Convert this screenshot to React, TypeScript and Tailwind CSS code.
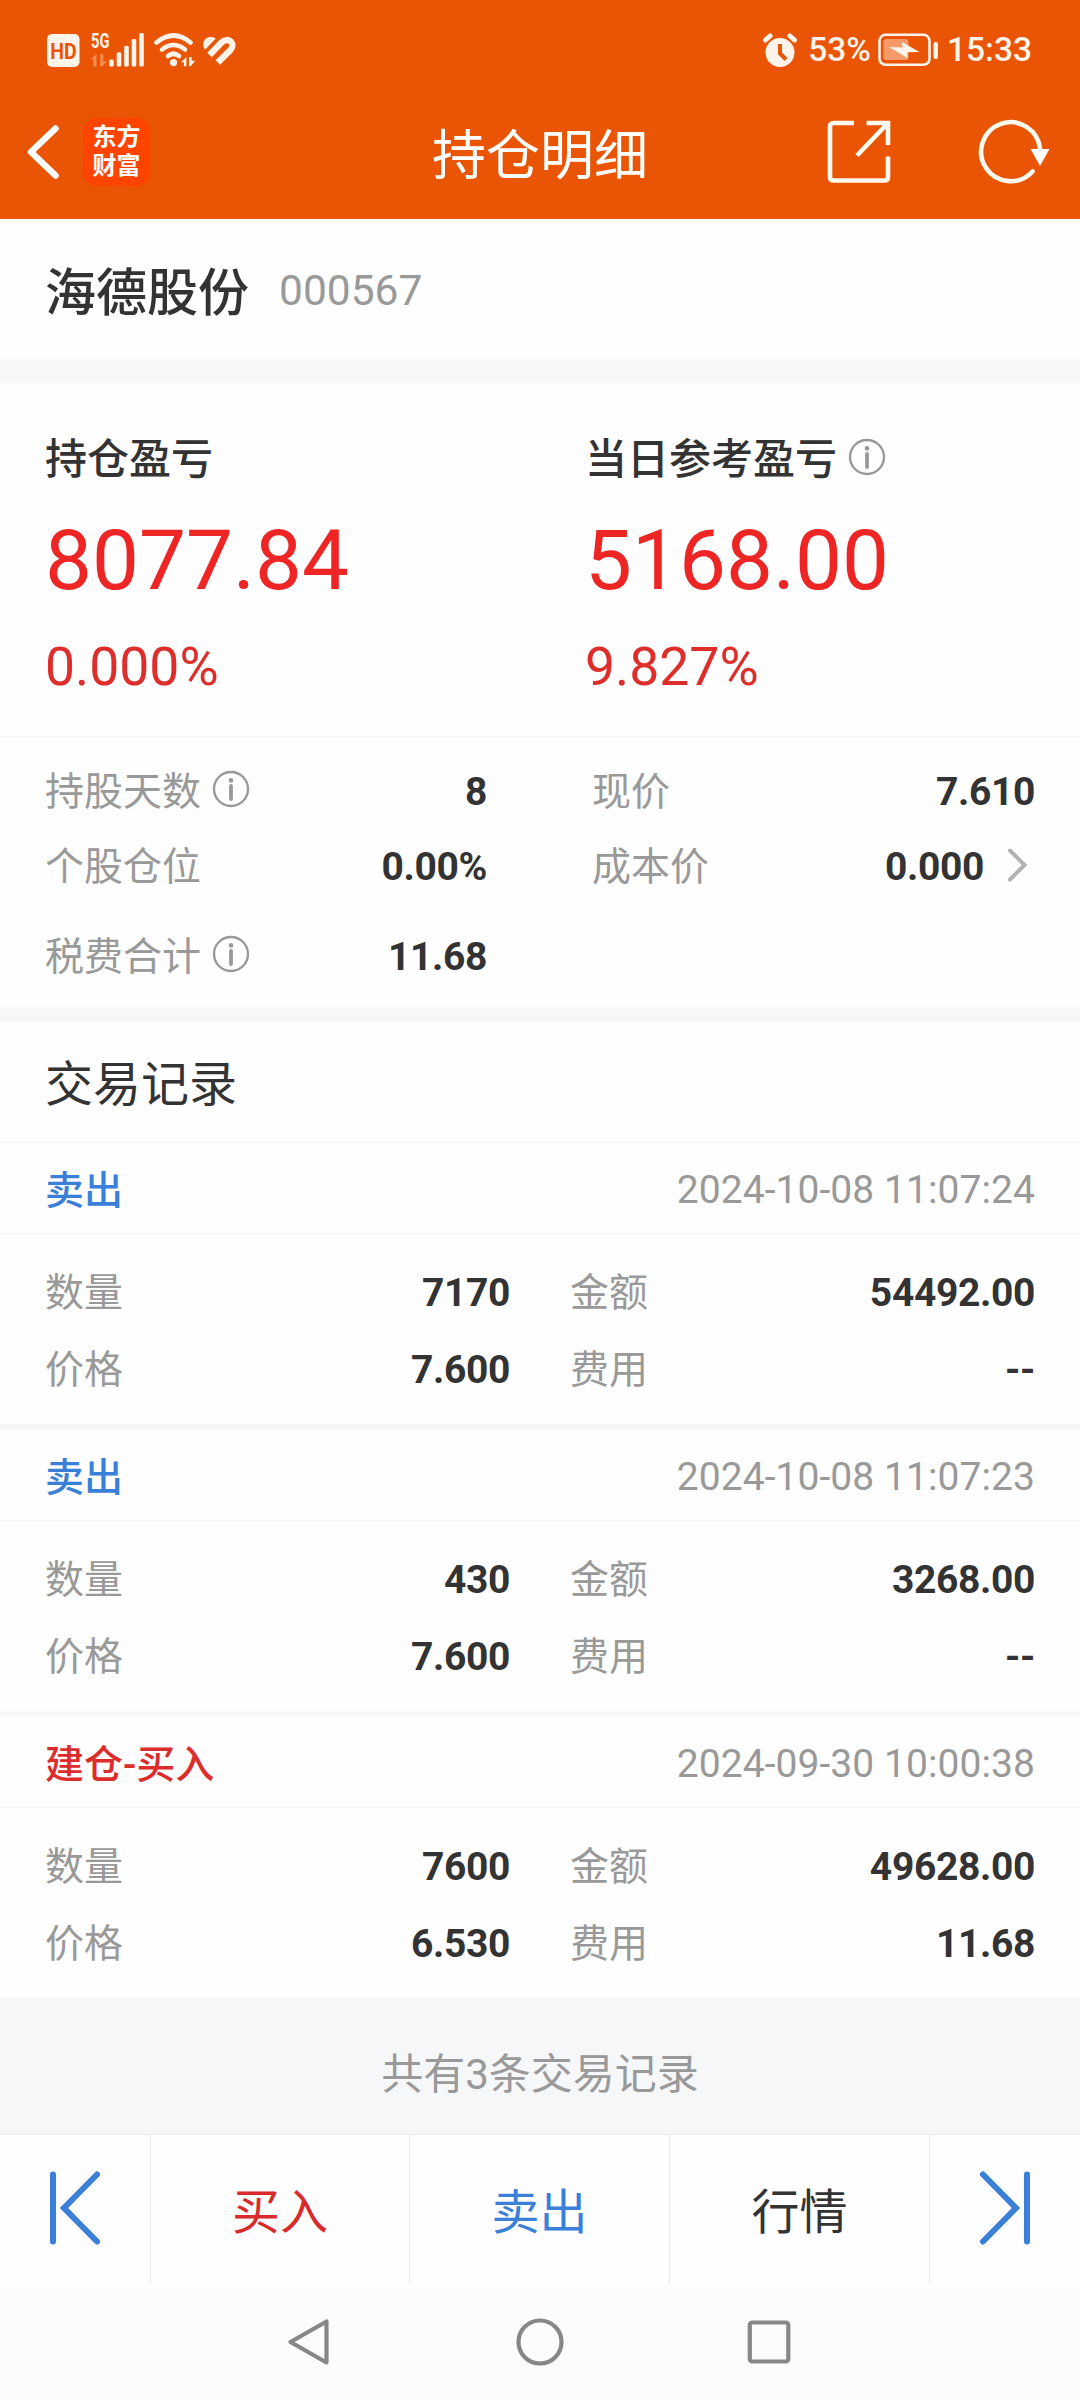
import type { ReactNode } from "react";

type TradeRecord = {
  type: string;
  color: string;
  time: string;
  count: string;
  amount: string;
  price: string;
  fee: string;
};

const records: TradeRecord[] = [
  { type: "卖出", color: "text-[#3a7fd8]", time: "2024-10-08 11:07:24", count: "7170", amount: "54492.00", price: "7.600", fee: "--" },
  { type: "卖出", color: "text-[#3a7fd8]", time: "2024-10-08 11:07:23", count: "430", amount: "3268.00", price: "7.600", fee: "--" },
  { type: "建仓-买入", color: "text-[#dd2c2c]", time: "2024-09-30 10:00:38", count: "7600", amount: "49628.00", price: "6.530", fee: "11.68" },
];

function InfoIcon() {
  return (
    <svg width="38" height="38" viewBox="0 0 38 38" fill="none" className="mb-[6px] ml-[11px] shrink-0">
      <circle cx="19" cy="19" r="17" stroke="#999" strokeWidth="2.4" />
      <circle cx="19" cy="10.4" r="2.3" fill="#999" />
      <path d="M19 16v13" stroke="#999" strokeWidth="3.8" strokeLinecap="round" />
    </svg>
  );
}

function StatusBar() {
  return (
    <div className="flex h-[84px] items-start justify-between pl-[46px] pr-[48px] pt-[30px]">
      <svg width="192" height="40" viewBox="46 30 192 40" fill="#fff3ea">
        <rect x="47" y="34" width="32.5" height="33" rx="5" />
        <text x="50.3" y="58.5" textLength="26.5" lengthAdjust="spacingAndGlyphs" fontSize="22" fontWeight="700" fill="#e95504">HD</text>
        <text x="91" y="48" textLength="18.5" lengthAdjust="spacingAndGlyphs" fontSize="21" fontWeight="700">5G</text>
        {/* モバイル通信の矢印 */}
        <path d="M96.5 54v12.3h-3.2v-7h-2.6zM100.3 54h3v7.4h3.7l-5 4.9h-1.7z" fill="#f78d52" />
        <rect x="109.2" y="59.5" width="4.6" height="7" rx="1.6" />
        <rect x="116.7" y="52.3" width="4.6" height="14.2" rx="1.6" />
        <rect x="124.2" y="45.7" width="4.6" height="20.8" rx="1.6" />
        <rect x="131.7" y="39" width="4.6" height="27.5" rx="1.6" />
        <rect x="139.2" y="33" width="4.6" height="33.5" rx="1.6" />
        <g fill="none" stroke="#fff3ea" strokeWidth="4.6" strokeLinecap="round">
          <path d="M156.5 42.5Q173.5 28.5 190.5 42.5" />
          <path d="M162 49.5Q173.5 40.5 185 49.5" />
          <path d="M168 56Q173.5 51.5 179 56" />
        </g>
        <circle cx="173.5" cy="62.6" r="3.6" />
        <path d="M186.4 57v9.3h-2.5v-4h-2.9zM189 57h2.6v3.7h3.6l-4.5 5.6H189z" />
        {/* ハート */}
        <path d="M205 49.8c-4-6-1-12.8 5.800-12.8 2 0 3.700.6 5 1.600z" />
        <path d="M209.500 55L221.500 42.500c3-3 7.300-3.200 9.500-.8s1.600 6-.8 8.600L217.800 62.500" fill="none" stroke="#fff3ea" strokeWidth="6.400" />
      </svg>
      <div className="flex items-center text-[33.5px] font-medium leading-[40px] text-[#fff3ea]">
        <svg width="36" height="36" viewBox="0 0 36 36" fill="none" className="mr-[10px]">
          <circle cx="18" cy="20.5" r="14.5" fill="#fff3ea" />
          <path d="M3.5 8l4.5-4M32.5 8l-4.5-4" stroke="#fff3ea" strokeWidth="5" strokeLinecap="round" />
          <path d="M18 12v9.5l6 6" stroke="#e95504" strokeWidth="4" />
        </svg>
        <span>53%</span>
        <svg width="61" height="34" viewBox="0 0 61 34" fill="none" className="ml-[7px] mr-[8px]">
          <rect x="1.5" y="1.8" width="50" height="30" rx="6" stroke="#fff3ea" strokeWidth="2.6" />
          <rect x="5.5" y="6" width="25" height="21" rx="3" fill="#f59a68" />
          <path d="M11 14l13.500 .5-.5-5.500 17.500 10-12.500.3 .8 6z" fill="#fff3ea" />
          <rect x="55.5" y="9" width="4.500" height="17" rx="2" fill="#fff3ea" />
        </svg>
        <span>15:33</span>
      </div>
    </div>
  );
}

function TitleBar() {
  return (
    <div className="grid h-[135px] grid-cols-[1fr_auto_1fr] items-center text-white">
      <div className="flex items-center pl-[26px]">
        <svg width="34" height="58" viewBox="0 0 34 58" fill="none">
          <path d="M29.5 5.5L5 29l24.5 23.5" stroke="#fff" strokeWidth="6.5" strokeLinecap="round" strokeLinejoin="round" />
        </svg>
        <div className="ml-[23px] flex h-[68px] w-[67px] flex-col items-center justify-center rounded-[14px] bg-[#ff4400] text-[24px] font-bold leading-[29px]">
          <span>东方</span>
          <span>财富</span>
        </div>
      </div>
      <h1 className="pt-[10px] text-[54px] leading-[60px]">持仓明细</h1>
      <div className="flex items-center justify-end pr-[30px]">
        <svg width="66" height="66" viewBox="0 0 66 66" fill="none" stroke="#fffaf0" strokeWidth="4.6">
          <path d="M28 4H7.5Q4 4 4 7.5v50.5q0 3.5 3.5 3.5h51q3.5 0 3.5-3.5V37.5" />
          <path d="M40.5 4H62v22M61.5 4.500L31 36.500" />
        </svg>
        <svg width="74" height="68" viewBox="0 0 74 68" fill="none" className="ml-[84px]">
          <path d="M56.5 53.5A29.5 29.5 0 1 1 64 31" stroke="#fffaf0" strokeWidth="4.6" strokeLinecap="round" />
          <path d="M54.5 31h19l-9.500 17z" fill="#fff" />
        </svg>
      </div>
    </div>
  );
}

function ProfitCard({ title, value, percent, info }: { title: string; value: string; percent: string; info?: boolean }) {
  return (
    <div className="w-[540px] pl-[45px] pt-[52px]">
      <div className="flex h-[50px] items-center text-[42px] font-medium leading-[50px] text-[#333]">
        {title}
        {info && <InfoIcon />}
      </div>
      <div className="mt-[25px] text-[83.6px] leading-[100px] text-[#ed2524]">{value}</div>
      <div className="mt-[27px] text-[53.5px] leading-[60px] text-[#de2e2c]">{percent}</div>
    </div>
  );
}

function Row({ label, value, info, children }: { label: string; value: string; info?: boolean; children?: ReactNode }) {
  return (
    <div className="flex h-[50px] items-center text-[39px] leading-[50px]">
      <span className="text-[#999]">{label}</span>
      {info && <InfoIcon />}
      <span className="ml-auto font-bold tracking-[-0.35px] text-[#333]">{value}</span>
      {children}
    </div>
  );
}

function RecordItem({ record }: { record: TradeRecord }) {
  return (
    <li>
      <div className="flex h-[91px] items-center justify-between border-b border-[#f4f5f6] px-[45px] pt-[4px] text-[39px]">
        <span className={`pt-[2px] font-medium ${record.color}`}>{record.type}</span>
        <span className="tracking-[0.07px] text-[#999]">{record.time}</span>
      </div>
      <div className="flex h-[190px] justify-between px-[45px] pt-[34px]">
        <div className="flex w-[465px] flex-col gap-[27px]">
          <Row label="数量" value={record.count} />
          <Row label="价格" value={record.price} />
        </div>
        <div className="flex w-[465px] flex-col gap-[27px]">
          <Row label="金额" value={record.amount} />
          <Row label="费用" value={record.fee} />
        </div>
      </div>
    </li>
  );
}

export default function App() {
  return (
    <div className="flex h-[2400px] w-[1080px] flex-col bg-[#fefefe] font-[Roboto,'Noto_Sans_CJK_SC',sans-serif]">
      <header className="h-[219px] bg-[#e95504]">
        <StatusBar />
        <TitleBar />
      </header>

      <div className="flex h-[140px] items-center pl-[45px]">
        <span className="pt-[10px] text-[51px] font-medium text-[#333]">海德股份</span>
        <span className="ml-[30px] pt-[4px] text-[42.5px] text-[#999]">000567</span>
      </div>
      <div className="h-[24px] bg-[#f6f7f9]" />

      <section className="flex h-[354px] border-b border-[#f4f5f6]">
        <ProfitCard title="持仓盈亏" value="8077.84" percent="0.000%" />
        <ProfitCard title="当日参考盈亏" value="5168.00" percent="9.827%" info />
      </section>

      <section className="flex h-[270px] justify-between px-[45px] pt-[30px]">
        <div className="w-[442px]">
          <Row label="持股天数" value="8" info />
          <div className="h-[25px]" />
          <Row label="个股仓位" value="0.00%" />
          <div className="h-[40px]" />
          <Row label="税费合计" value="11.68" info />
        </div>
        <div className="w-[443px]">
          <Row label="现价" value="7.610" />
          <div className="h-[25px]" />
          <Row label="成本价" value="0.000">
            <svg width="22" height="36" viewBox="0 0 22 36" fill="none" className="mb-[5px] ml-[23px] mr-[6px]">
              <path d="M3 3.5l14.5 14.5L3 32.5" stroke="#b2b2b2" strokeWidth="4" strokeLinecap="round" />
            </svg>
          </Row>
        </div>
      </section>
      <div className="h-[15px] bg-[#f6f7f9]" />

      <h2 className="flex h-[121px] items-center border-b border-[#f4f5f6] pl-[45px] pt-[6px] text-[48px] text-[#333]">交易记录</h2>
      <ul className="flex flex-col gap-[6px] bg-[#f6f7f9] [&>li]:bg-[#fefefe]">
        {records.map((record) => (
          <RecordItem key={record.time} record={record} />
        ))}
      </ul>

      <div className="flex h-[136px] items-center justify-center bg-[#f6f7f9] pt-[17px] text-[42px] text-[#999]">共有3条交易记录</div>

      <div className="flex h-[150px] items-center divide-x divide-[#ececee] border-t border-[#e9eaec] text-[48px] [&>*]:flex [&>*]:h-full [&>*]:items-center [&>*]:justify-center">
        <button className="w-[151px] pb-[4px]">
          <svg width="54" height="76" viewBox="0 0 54 76" fill="none" stroke="#3a7fd8" strokeWidth="6" strokeLinecap="round">
            <path d="M5 4.5v67M49 4.5L16 38l33 33.5" />
          </svg>
        </button>
        <button className="w-[259px] pt-[7px] text-[#d92b2b]">买入</button>
        <button className="w-[260px] pt-[7px] text-[#3a7fd8]">卖出</button>
        <button className="w-[260px] pt-[7px] text-[#333]">行情</button>
        <button className="w-[150px] pb-[4px]">
          <svg width="54" height="76" viewBox="0 0 54 76" fill="none" stroke="#3a7fd8" strokeWidth="6" strokeLinecap="round">
            <path d="M49 4.5v67M5 4.5L38 38 5 71.5" />
          </svg>
        </button>
      </div>

      <nav className="flex h-[116px] justify-center gap-[180px] bg-[#fcfcfc] pt-[33px]">
        <svg width="50" height="50" viewBox="0 0 50 50" fill="none" stroke="#878787" strokeWidth="4.2" strokeLinejoin="round">
          <path d="M41.5 4.5v41L5.500 25z" />
        </svg>
        <svg width="50" height="50" viewBox="0 0 50 50" fill="none" stroke="#878787" strokeWidth="4.2">
          <circle cx="25" cy="25" r="21.5" />
        </svg>
        <svg width="50" height="50" viewBox="0 0 50 50" fill="none" stroke="#878787" strokeWidth="4.2">
          <rect x="4.8" y="5.5" width="38.5" height="39" rx="2.5" />
        </svg>
      </nav>
    </div>
  );
}
